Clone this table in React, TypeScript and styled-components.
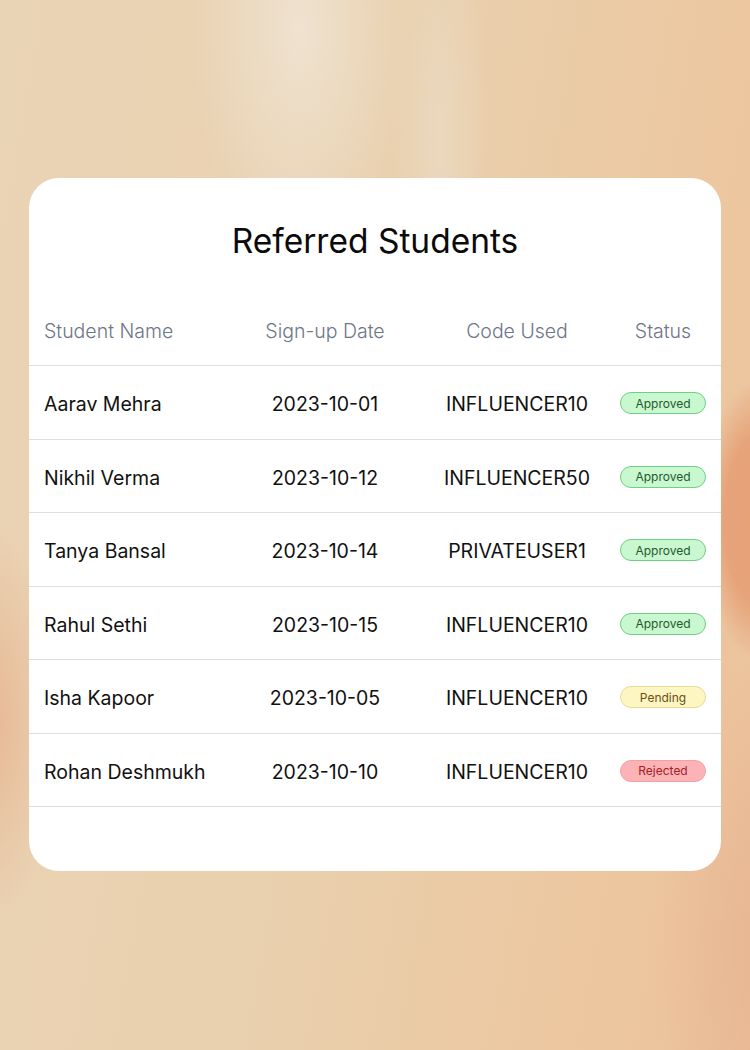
import React from "react";
import styled, { createGlobalStyle } from "styled-components";

const Global = createGlobalStyle`
  html, body { margin: 0; padding: 0; }
  body {
    width: 750px;
    height: 1050px;
    overflow: hidden;
    font-family: Inter, "Noto Sans", sans-serif;
  }
`;

const Page = styled.div`
  width: 750px;
  height: 1050px;
  box-sizing: border-box;
  padding: 178px 29px 0 29px;
  background:
    radial-gradient(ellipse 60px 140px at 760px 520px, rgba(230, 160, 118, 1) 0%, rgba(230, 160, 118, 0.9) 60%, rgba(230, 160, 118, 0) 100%),
    radial-gradient(ellipse 110px 240px at 300px 30px, rgba(240, 230, 215, 0.8), rgba(240, 230, 215, 0) 100%),
    radial-gradient(ellipse 50px 260px at 440px 140px, rgba(236, 224, 205, 0.55), rgba(236, 224, 205, 0) 100%),
    radial-gradient(ellipse 70px 200px at -10px 720px, rgba(230, 172, 135, 0.7), rgba(230, 172, 135, 0) 100%),
    radial-gradient(ellipse 120px 300px at 770px 950px, rgba(230, 175, 140, 0.7), rgba(230, 175, 140, 0) 100%),
    linear-gradient(100deg, #ead4b6 0%, #e9d0ae 45%, #ecc7a0 80%, #ebc29c 100%);
`;

const Card = styled.div`
  background: #ffffff;
  border-radius: 30px;
  height: 693px;
  overflow: hidden;
  display: flex;
  flex-direction: column;
`;

const Title = styled.h1`
  margin: 0;
  padding-top: 41px;
  height: 120px;
  box-sizing: border-box;
  text-align: center;
  font-size: 33.5px;
  font-weight: 400;
  color: #0b0b0b;
  line-height: 44px;
`;

const Row = styled.div<{ $head?: boolean }>`
  display: grid;
  grid-template-columns: 200px 192px 192px 100px 8px;
  align-items: center;
  height: ${(p) => (p.$head ? "68px" : "73.5px")};
  box-sizing: border-box;
  border-bottom: 1px solid #dedede;
  color: ${(p) => (p.$head ? "#6e7687" : "#111111")};
  font-size: 19.5px;
  font-weight: ${(p) => (p.$head ? 300 : 400)};
  padding-top: ${(p) => (p.$head ? "0" : "4px")};
  padding-bottom: ${(p) => (p.$head ? "2px" : "0")};
`;

const Cell = styled.div<{ $left?: boolean }>`
  text-align: ${(p) => (p.$left ? "left" : "center")};
  padding-left: ${(p) => (p.$left ? "15px" : "0")};
  white-space: nowrap;
`;

const BadgeCell = styled.div`
  display: flex;
  justify-content: center;
  padding-bottom: 2px;
`;

const tones = {
  Approved: { bg: "#c9f7cf", border: "#6fcf83", fg: "#1f5a2a" },
  Pending: { bg: "#fdf6c2", border: "#e6dc98", fg: "#6b4e12" },
  Rejected: { bg: "#fbb3b5", border: "#f3a1a4", fg: "#a3202b" },
};

type Status = keyof typeof tones;

const Badge = styled.span<{ $s: Status }>`
  display: inline-flex;
  align-items: center;
  justify-content: center;
  width: 86px;
  height: 22px;
  box-sizing: border-box;
  border-radius: 11px;
  background: ${(p) => tones[p.$s].bg};
  border: 1px solid ${(p) => tones[p.$s].border};
  color: ${(p) => tones[p.$s].fg};
  font-size: 12px;
  font-weight: 400;
`;

const rows: [string, string, string, Status][] = [
  ["Aarav Mehra", "2023-10-01", "INFLUENCER10", "Approved"],
  ["Nikhil Verma", "2023-10-12", "INFLUENCER50", "Approved"],
  ["Tanya Bansal", "2023-10-14", "PRIVATEUSER1", "Approved"],
  ["Rahul Sethi", "2023-10-15", "INFLUENCER10", "Approved"],
  ["Isha Kapoor", "2023-10-05", "INFLUENCER10", "Pending"],
  ["Rohan Deshmukh", "2023-10-10", "INFLUENCER10", "Rejected"],
];

export default function App() {
  return (
    <>
      <Global />
      <Page>
        <Card>
          <Title>Referred Students</Title>
          <Row $head>
            <Cell $left>Student Name</Cell>
            <Cell>Sign-up Date</Cell>
            <Cell>Code Used</Cell>
            <Cell>Status</Cell>
            <span />
          </Row>
          {rows.map(([n, d, c, s]) => (
            <Row key={n}>
              <Cell $left>{n}</Cell>
              <Cell>{d}</Cell>
              <Cell>{c}</Cell>
              <BadgeCell>
                <Badge $s={s}>{s}</Badge>
              </BadgeCell>
              <span />
            </Row>
          ))}
        </Card>
      </Page>
    </>
  );
}
